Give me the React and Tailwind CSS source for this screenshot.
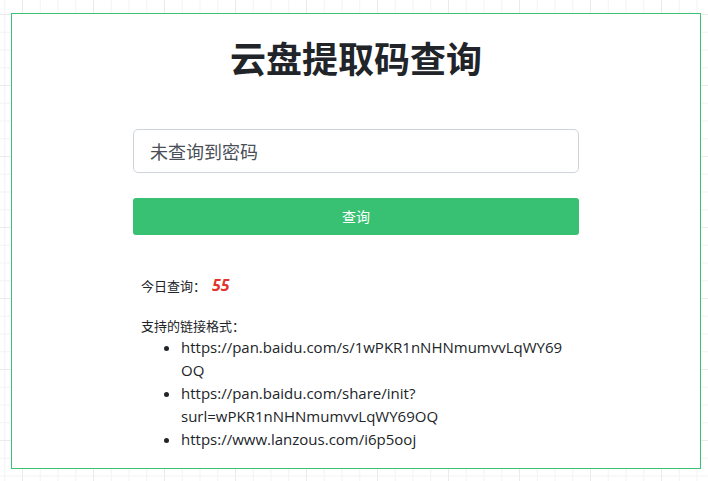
const links = [
  'https://pan.baidu.com/s/1wPKR1nNHNmumvvLqWY69OQ',
  'https://pan.baidu.com/share/init?surl=wPKR1nNHNmumvvLqWY69OQ',
  'https://www.lanzous.com/i6p5ooj',
];

const App = () => {
  return (
    <div className="min-h-screen pt-[13px] pl-[11px] bg-white bg-[linear-gradient(to_right,#ebebeb_1px,transparent_1px),linear-gradient(to_bottom,#ebebeb_1px,transparent_1px),linear-gradient(to_right,#f3f3f3_1px,transparent_1px),linear-gradient(to_bottom,#f3f3f3_1px,transparent_1px)] bg-[size:71px_71px,71px_71px,17.75px_17.75px,17.75px_17.75px] bg-[position:22px_14px,22px_14px,22px_14px,22px_14px] font-['Open_Sans','Noto_Sans_CJK_SC',sans-serif]">
      <div className="w-[690px] h-[456px] border border-[#3cc277] bg-white flex flex-col items-center">
        <h1 className="mt-[24px] text-[36px] leading-[1.2] font-bold text-[#212529]">
          云盘提取码查询
        </h1>

        <div className="w-[446px] mt-[48px]">
          <input
            type="text"
            readOnly
            value="未查询到密码"
            className="w-full h-[44px] px-[16px] text-[18px] text-[#495057] border border-[#ced4da] rounded-[5px] outline-none"
          />
          <button className="w-full h-[37px] mt-[25px] bg-[#38c172] text-white text-[14px] rounded-[3px]">
            查询
          </button>

          <div className="px-[8px] mt-[40px] text-[13px] text-[#212529]">
            <p className="leading-[20px]">
              今日查询：
              <span className="ml-[6px] text-[16px] text-[#e3342f] font-bold italic">55</span>
            </p>
            <p className="mt-[20px] leading-[20px]">支持的链接格式：</p>
            <ul className="list-disc pl-[40px] text-[15px] leading-[23px] text-[#212529]">
              {links.map((link) => (
                <li key={link} className="[overflow-wrap:break-word]">
                  {link}
                </li>
              ))}
            </ul>
          </div>
        </div>
      </div>
    </div>
  );
};

export default App;
